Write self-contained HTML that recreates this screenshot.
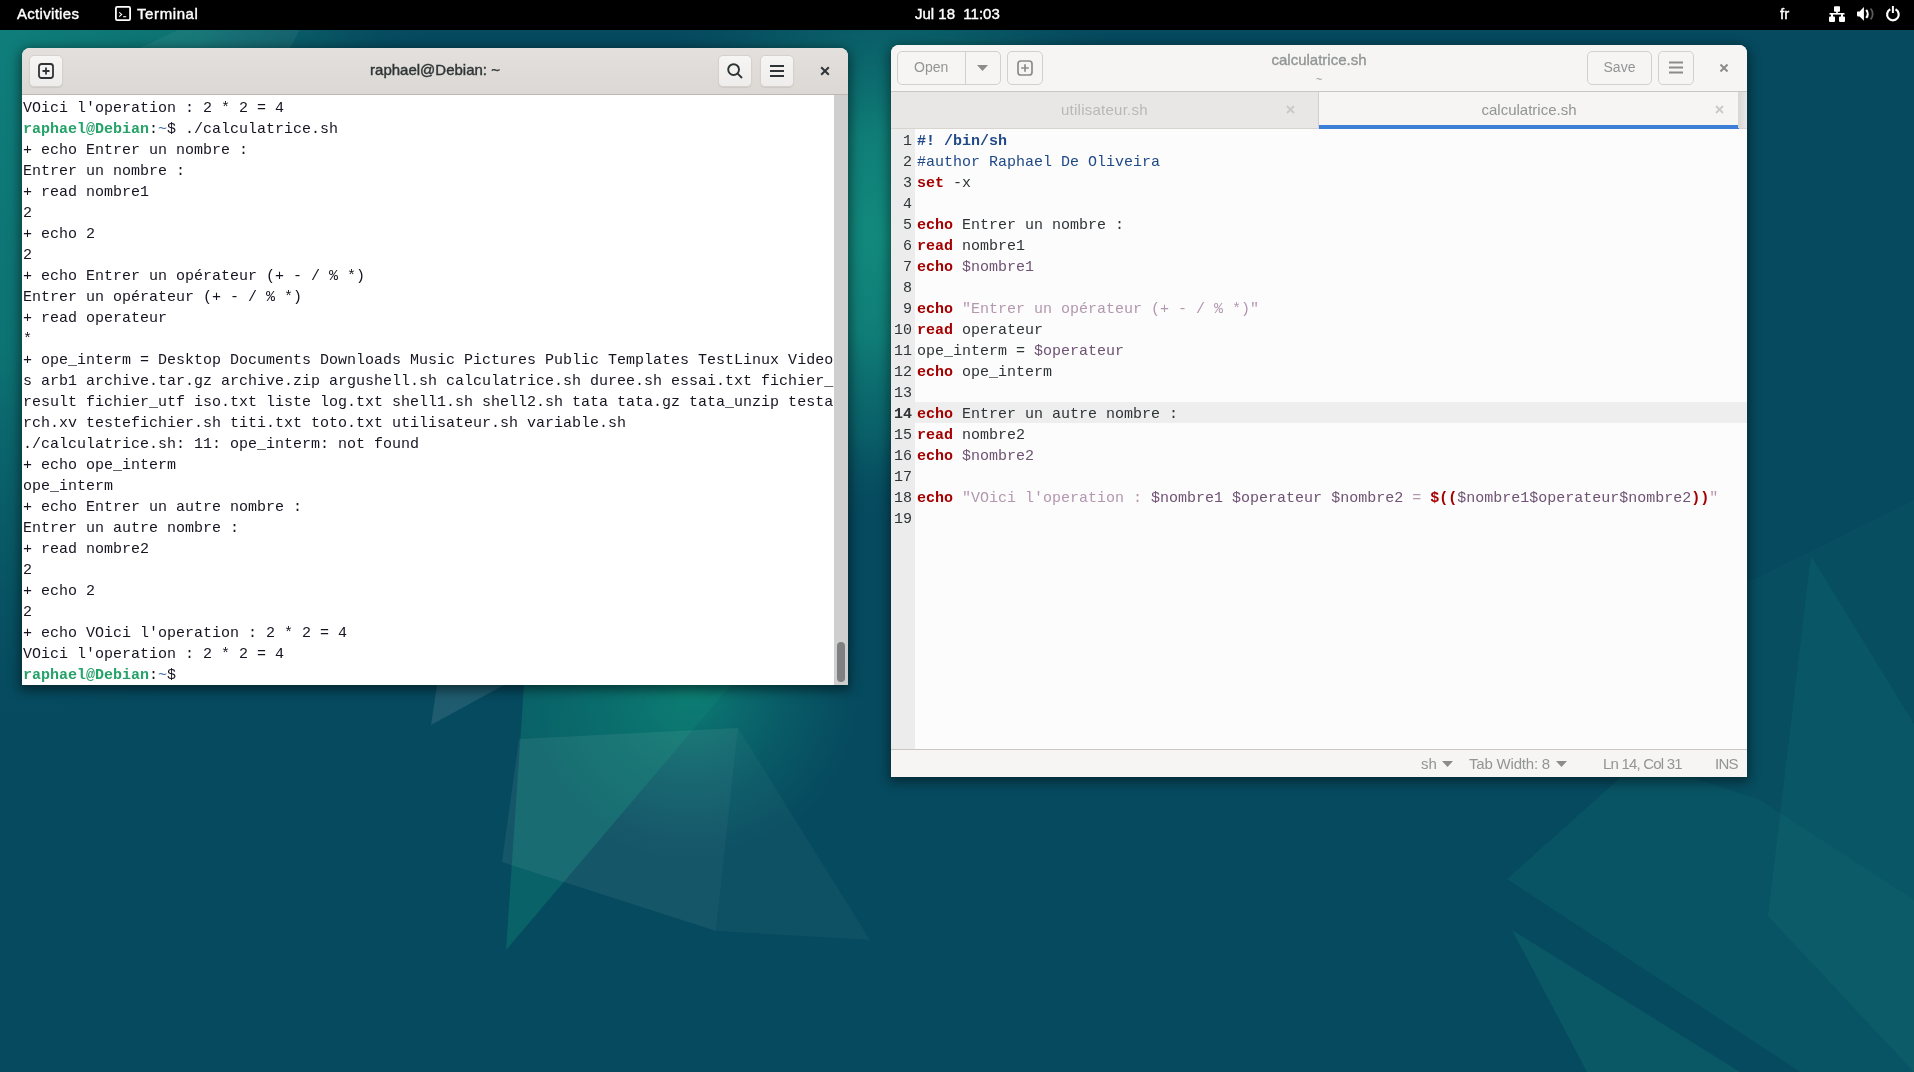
<!DOCTYPE html>
<html><head><meta charset="utf-8">
<style>
*{margin:0;padding:0;box-sizing:border-box}
html,body{width:1914px;height:1072px;overflow:hidden}
body{position:relative;background:#064a5f;font-family:"Liberation Sans",sans-serif}
.a{position:absolute}
#wall{position:absolute;left:0;top:0}
#topbar{will-change:transform;position:absolute;left:0;top:0;width:1914px;height:30px;background:#000;color:#fff;font-weight:normal;font-size:15px;-webkit-text-stroke:0.4px #fff}
#topbar span{position:absolute;top:5px;white-space:nowrap;line-height:18px}
.win{position:absolute;overflow:hidden;border-radius:8px 8px 0 0;will-change:transform}
/* terminal */
#term{left:22px;top:48px;width:826px;height:637px;background:#fff;box-shadow:0 3px 12px 2px rgba(0,0,0,.5)}
#term .hb{position:absolute;left:0;top:0;width:826px;height:47px;background:linear-gradient(#e3e0dd,#dcd8d4);border-bottom:1px solid #bfb8b1}
.btn{position:absolute;border-radius:5px;background:linear-gradient(#f6f5f4,#efedec);border:1px solid #cdc7c2;box-shadow:0 1px 1px rgba(0,0,0,.08)}
#term .btn{border-color:#d6d1cd}
#ttitle{position:absolute;left:0;width:826px;top:13px;text-align:center;font-weight:normal;-webkit-text-stroke:0.4px #2e3436;font-size:15px;color:#2e3436;line-height:18px}
.mono{font-family:"Liberation Mono",monospace;font-size:15px;line-height:21px;white-space:pre}
#tt{position:absolute;left:1px;top:50px;color:#171421}
.pg{color:#26a269;font-weight:bold}
.pb{color:#3a67a5}
#sb{position:absolute;left:812px;top:47px;width:14px;height:590px;background:#cfcfcf}
#sbs{position:absolute;left:3px;top:547px;width:8px;height:40px;border-radius:4px;background:#7e8081}
/* gedit */
#ged{left:891px;top:45px;width:856px;height:732px;background:#fcfcfc;box-shadow:0 3px 12px 2px rgba(0,0,0,.45)}
#ged .hb{position:absolute;left:0;top:0;width:856px;height:47px;background:#f6f5f4;border-bottom:1px solid #cdc7c2}
#ged .btn{background:#f6f5f4;border-color:#d3cfcb;box-shadow:none}
.gtxt{position:absolute;color:#929595;font-size:15px;line-height:18px;white-space:nowrap}
#tabs{position:absolute;left:0;top:47px;width:856px;height:37px;background:#e8e7e6;border-bottom:1px solid #d8d4d0}
#tab2{position:absolute;left:427px;top:0;width:420px;height:37px;background:#f6f5f4;border-left:1px solid #d3cfcb}
#tabul{position:absolute;left:0;bottom:0;width:420px;height:4px;background:#3d7fd6}
#tabend{position:absolute;left:847px;top:0;width:9px;height:36px;background:linear-gradient(90deg,#d8d6d4,#ebe9e7)}
#gut{position:absolute;left:0;top:84px;width:24px;height:620px;background:#ececec}
#gnum{position:absolute;left:0;top:86px;width:21px;text-align:right;color:#2e3436}
#cur{position:absolute;left:24px;top:357px;width:832px;height:21px;background:#eeeeee}
#gcode{position:absolute;left:26px;top:86px;color:#2e3436}
#status{position:absolute;left:0;top:704px;width:856px;height:28px;background:#f6f5f4;border-top:1px solid #cdc7c2}
.kw{color:#a40000;font-weight:bold}
.cm{color:#204a87}
.sh{color:#204a87;font-weight:bold}
.st{color:#b397af}
.vr{color:#6f5274}
</style></head><body>
<svg id="wall" width="1914" height="1072" viewBox="0 0 1914 1072">
<defs>
<radialGradient id="tl" cx="0" cy="0" r="1" gradientUnits="userSpaceOnUse" gradientTransform="translate(0 30) scale(430 720)">
<stop offset="0" stop-color="#0f7e7a"/><stop offset="0.45" stop-color="#0d7473" stop-opacity="0.95"/><stop offset="0.75" stop-color="#0a6069" stop-opacity="0.55"/><stop offset="1" stop-color="#064a5f" stop-opacity="0"/>
</radialGradient>
<radialGradient id="r1" cx="0" cy="0" r="1" gradientUnits="userSpaceOnUse" gradientTransform="translate(890 235) scale(310 290)">
<stop offset="0" stop-color="#128a7d"/><stop offset="0.35" stop-color="#108078" stop-opacity="0.95"/><stop offset="0.7" stop-color="#0c6c6e" stop-opacity="0.6"/><stop offset="1" stop-color="#064a5f" stop-opacity="0"/>
</radialGradient>
<radialGradient id="r2" cx="690" cy="690" r="170" gradientUnits="userSpaceOnUse">
<stop offset="0" stop-color="#0d7d74"/><stop offset="1" stop-color="#0b6a6e" stop-opacity="0"/>
</radialGradient>
</defs>
<rect width="1914" height="1072" fill="#064a5f"/>
<rect width="1914" height="1072" fill="url(#tl)"/>
<rect width="1914" height="1072" fill="url(#r1)"/>
<rect width="1914" height="1072" fill="url(#r2)"/>
<polygon points="140,48 178,30 300,30 290,48" fill="#ffffff" fill-opacity="0.05"/>
<polygon points="437,685 504,685 431,725" fill="#ffffff" fill-opacity="0.1"/>
<polygon points="506,950 524,685 731,685" fill="#0d8074" fill-opacity="0.45"/>
<polygon points="519,739 738,728 716,931 502,862" fill="#ffffff" fill-opacity="0.065"/>
<polygon points="738,728 870,940 716,931" fill="#ffffff" fill-opacity="0.035"/>
<polygon points="1747,583 1914,500 1914,1072 1800,1072 1507,879 1640,760" fill="#2a9a90" fill-opacity="0.06"/>
<polygon points="1811,556 1914,724 1914,1072 1768,916" fill="#1a8a80" fill-opacity="0.16"/>
<polygon points="1507,879 1640,760 1760,800 1914,900 1914,1072 1800,1072" fill="#1a8a80" fill-opacity="0.1"/>
<polygon points="1512,930 1740,1072 1587,1072" fill="#1a8a80" fill-opacity="0.22"/>
</svg>
<div id="topbar">
<span style="left:17px;font-size:15px;letter-spacing:0.3px">Activities</span>
<svg class="a" style="left:115px;top:6px" width="16" height="15" viewBox="0 0 16 15"><rect x="0.9" y="0.9" width="14.2" height="13.2" rx="1.3" fill="none" stroke="#fff" stroke-width="1.8"/><path d="M4.2 6.3l2.5 2.1-2.5 2.3" fill="none" stroke="#fff" stroke-width="1.1"/><path d="M8.2 10.7h3" fill="none" stroke="#fff" stroke-width="1.1"/></svg>
<span style="left:137px;letter-spacing:0.6px">Terminal</span>
<span style="left:915px;letter-spacing:0px">Jul 18&nbsp; 11:03</span>
<span style="left:1780px">fr</span>
<svg class="a" style="left:1829px;top:6px" width="16" height="16" viewBox="0 0 16 16" fill="#fff"><rect x="5" y="0.3" width="6" height="5.5" rx="0.8"/><rect x="7.2" y="5" width="1.6" height="3"/><rect x="0.5" y="7" width="15" height="1.6"/><rect x="2" y="8" width="2" height="3"/><rect x="12" y="8" width="2" height="3"/><rect x="0" y="10.6" width="6" height="5.3" rx="0.8"/><rect x="10" y="10.6" width="6" height="5.3" rx="0.8"/></svg>
<svg class="a" style="left:1857px;top:6px" width="17" height="16" viewBox="0 0 17 16"><path d="M0 6.2Q0 5.4 0.8 5.4H2.6L6.9 1V14.8L2.6 10.4H0.8Q0 10.4 0 9.6z" fill="#fff"/><path d="M9.2 3.9A6.1 6.1 0 0 1 9.2 11.9" fill="none" stroke="#fff" stroke-width="2.2"/><path d="M13.6 2.5A8.12 8.12 0 0 1 13.6 13.4" fill="none" stroke="#5a5a5a" stroke-width="1.8"/></svg>
<svg class="a" style="left:1885px;top:6px" width="16" height="16" viewBox="0 0 16 16" fill="none" stroke="#fff" stroke-width="2.2"><path d="M5.3 3.3A5.8 5.8 0 1 0 10.5 3.3"/><path d="M7.9 0V7" stroke-width="2"/></svg>
</div>
<div id="term" class="win">
<div class="hb">
<div class="btn" style="left:7px;top:7px;width:34px;height:32px"></div>
<svg class="a" style="left:16px;top:15px" width="16" height="16" viewBox="0 0 16 16" fill="none" stroke="#2e3436" stroke-width="1.8"><rect x="1" y="1" width="14" height="14" rx="2.5"/><path d="M8 4.5v7M4.5 8h7"/></svg>
<div id="ttitle">raphael@Debian: ~</div>
<div class="btn" style="left:696px;top:7px;width:34px;height:32px"></div>
<svg class="a" style="left:704px;top:14px" width="18" height="18" viewBox="0 0 18 18" fill="none" stroke="#2e3436" stroke-width="1.9"><circle cx="7.6" cy="7.6" r="5.4"/><path d="M11.4 11.4l4.6 4.6"/></svg>
<div class="btn" style="left:738px;top:7px;width:34px;height:32px"></div>
<svg class="a" style="left:748px;top:15px" width="14" height="14" viewBox="0 0 14 14" fill="#2e3436"><rect x="0" y="2" width="14" height="2"/><rect x="0" y="7" width="14" height="2"/><rect x="0" y="12" width="14" height="2"/></svg>
<svg class="a" style="left:797px;top:17px" width="12" height="12" viewBox="0 0 12 12" fill="none" stroke="#2e3436" stroke-width="2"><path d="M2.2 2.2l7.6 7.6M9.8 2.2l-7.6 7.6"/></svg>
</div>
<div id="tt" class="mono">VOici l'operation : 2 * 2 = 4
<span class="pg">raphael@Debian</span>:<span class="pb">~</span>$ ./calculatrice.sh
+ echo Entrer un nombre :
Entrer un nombre :
+ read nombre1
2
+ echo 2
2
+ echo Entrer un opérateur (+ - / % *)
Entrer un opérateur (+ - / % *)
+ read operateur
*
+ ope_interm = Desktop Documents Downloads Music Pictures Public Templates TestLinux Video
s arb1 archive.tar.gz archive.zip argushell.sh calculatrice.sh duree.sh essai.txt fichier_
result fichier_utf iso.txt liste log.txt shell1.sh shell2.sh tata tata.gz tata_unzip testa
rch.xv testefichier.sh titi.txt toto.txt utilisateur.sh variable.sh
./calculatrice.sh: 11: ope_interm: not found
+ echo ope_interm
ope_interm
+ echo Entrer un autre nombre :
Entrer un autre nombre :
+ read nombre2
2
+ echo 2
2
+ echo VOici l'operation : 2 * 2 = 4
VOici l'operation : 2 * 2 = 4
<span class="pg">raphael@Debian</span>:<span class="pb">~</span>$</div>
<div id="sb"><div id="sbs"></div></div>
</div>
<div id="ged" class="win">
<div class="hb">
<div class="btn" style="left:6px;top:6px;width:104px;height:34px"></div>
<div class="a" style="left:74px;top:7px;width:1px;height:32px;background:#d3cfcb"></div>
<div class="gtxt" style="left:23px;top:13px;font-size:14px">Open</div>
<svg class="a" style="left:86px;top:20px" width="11" height="6" viewBox="0 0 11 6"><path d="M0 0h11L5.5 6z" fill="#8b8b8b"/></svg>
<div class="btn" style="left:116px;top:6px;width:36px;height:34px"></div>
<svg class="a" style="left:126px;top:15px" width="16" height="16" viewBox="0 0 16 16" fill="none" stroke="#8b8b8b" stroke-width="1.7"><rect x="1" y="1" width="14" height="14" rx="2.8"/><path d="M8 4.2v7.6M4.2 8h7.6"/></svg>
<div class="gtxt" style="left:0;width:856px;text-align:center;top:6px;font-weight:normal;-webkit-text-stroke:0.35px #929595;font-size:15px">calculatrice.sh</div>
<div class="gtxt" style="left:0;width:856px;text-align:center;top:25px;font-size:11px">~</div>
<div class="btn" style="left:696px;top:6px;width:65px;height:34px"></div>
<div class="gtxt" style="left:696px;width:65px;text-align:center;top:13px;font-size:14px">Save</div>
<div class="btn" style="left:767px;top:6px;width:36px;height:34px"></div>
<svg class="a" style="left:778px;top:16px" width="14" height="13" viewBox="0 0 14 13" fill="#8b8b8b"><rect x="0" y="0.5" width="14" height="2"/><rect x="0" y="5.5" width="14" height="2"/><rect x="0" y="10.5" width="14" height="2"/></svg>
<svg class="a" style="left:829px;top:19px" width="8" height="8" viewBox="0 0 8 8" fill="none" stroke="#8b8b8b" stroke-width="2"><path d="M0.5 0.5l7 7M7.5 0.5l-7 7"/></svg>
</div>
<div id="tabs">
<div class="gtxt" style="left:170px;top:9px;color:#b8b8b6;letter-spacing:0.25px">utilisateur.sh</div>
<svg class="a" style="left:395px;top:13px" width="9" height="9" viewBox="0 0 9 9" fill="none" stroke="#c9c9c7" stroke-width="1.8"><path d="M1 1l7 7M8 1l-7 7"/></svg>
<div id="tab2">
<div class="gtxt" style="left:0;width:420px;text-align:center;top:9px;color:#929595">calculatrice.sh</div>
<svg class="a" style="left:396px;top:13px" width="9" height="9" viewBox="0 0 9 9" fill="none" stroke="#c9c9c7" stroke-width="1.8"><path d="M1 1l7 7M8 1l-7 7"/></svg>
<div id="tabul"></div>
</div>
<div id="tabend"></div>
</div>
<div id="gut"></div>
<div id="cur"></div>
<div id="gnum" class="mono">1
2
3
4
5
6
7
8
9
10
11
12
13
<b>14</b>
15
16
17
18
19</div>
<div id="gcode" class="mono"><span class="sh">#! /bin/sh</span>
<span class="cm">#author Raphael De Oliveira</span>
<span class="kw">set</span> -x

<span class="kw">echo</span> Entrer un nombre :
<span class="kw">read</span> nombre1
<span class="kw">echo</span> <span class="vr">$nombre1</span>

<span class="kw">echo</span> <span class="st">"Entrer un opérateur (+ - / % *)"</span>
<span class="kw">read</span> operateur
ope_interm = <span class="vr">$operateur</span>
<span class="kw">echo</span> ope_interm

<span class="kw">echo</span> Entrer un autre nombre :
<span class="kw">read</span> nombre2
<span class="kw">echo</span> <span class="vr">$nombre2</span>

<span class="kw">echo</span> <span class="st">"VOici l'operation : </span><span class="vr">$nombre1</span> <span class="vr">$operateur</span> <span class="vr">$nombre2</span><span class="st"> = </span><span class="kw">$((</span><span class="vr">$nombre1$operateur$nombre2</span><span class="kw">))</span><span class="st">"</span>
</div>
<div id="status">
<div class="gtxt" style="left:530px;top:5px">sh</div>
<svg class="a" style="left:551px;top:11px" width="11" height="6" viewBox="0 0 11 6"><path d="M0 0h11L5.5 6z" fill="#8b8b8b"/></svg>
<div class="gtxt" style="left:578px;top:5px;letter-spacing:-0.2px">Tab Width: 8</div>
<svg class="a" style="left:665px;top:11px" width="11" height="6" viewBox="0 0 11 6"><path d="M0 0h11L5.5 6z" fill="#8b8b8b"/></svg>
<div class="gtxt" style="left:712px;top:5px;letter-spacing:-0.8px">Ln 14, Col 31</div>
<div class="gtxt" style="left:824px;top:5px;letter-spacing:-0.7px">INS</div>
</div>
</div>
</body></html>
